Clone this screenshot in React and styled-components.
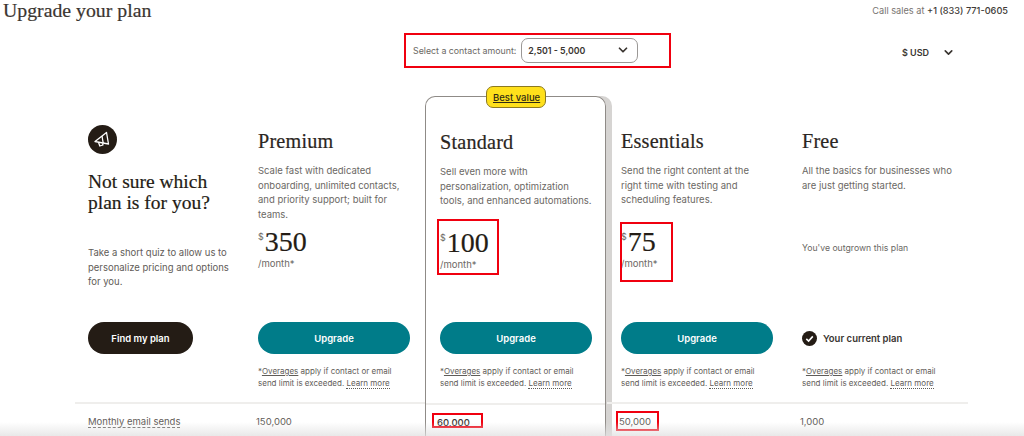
import styled, { createGlobalStyle } from 'styled-components';
import { FiChevronDown } from 'react-icons/fi';

const GlobalStyle = createGlobalStyle`
  html, body {
    margin: 0;
    padding: 0;
    background: #fff;
  }
  * {
    box-sizing: border-box;
  }
`;

const SERIF = '"Liberation Serif", serif';
const SANS = 'Inter, "Liberation Sans", sans-serif';

const Page = styled.div`
  position: relative;
  width: 1024px;
  height: 436px;
  overflow: hidden;
  display: flex;
  flex-direction: column;
  font-family: ${SANS};
  color: #241c15;
  &::after {
    content: '';
    position: absolute;
    left: 0;
    right: 0;
    bottom: 0;
    height: 14px;
    background: linear-gradient(180deg, rgba(225, 225, 225, 0), rgba(225, 225, 225, 0.75));
    pointer-events: none;
  }
`;

const Header = styled.header`
  height: 33px;
  padding: 0 16px 0 3px;
  display: flex;
  justify-content: space-between;
  align-items: flex-start;
`;

const Title = styled.h1`
  margin: 0;
  font: 400 19.8px/21px ${SERIF};
  -webkit-text-stroke: 0.2px #3b3530;
  color: #3b3530;
`;

const Sales = styled.div`
  margin-top: 4px;
  font-size: 9.2px;
  line-height: 14px;
  color: #77736f;
  b {
    font-weight: 500;
    color: #403a36;
  }
`;

const Toolbar = styled.div`
  height: 63px;
  padding: 0 69px 0 404px;
  display: flex;
  justify-content: space-between;
  align-items: flex-start;
`;

const ContactPicker = styled.div`
  width: 267px;
  height: 35px;
  padding: 0 0 1px 7px;
  display: flex;
  align-items: center;
  gap: 5px;
  border: 2px solid #f0000f;
  font-size: 8.8px;
  color: #6b6864;
`;

const SelectBox = styled.div`
  width: 117px;
  height: 25px;
  padding: 0 7px 0 6px;
  display: flex;
  align-items: center;
  justify-content: space-between;
  border: 1px solid #9b9896;
  border-radius: 7px;
  font-size: 8.8px;
  font-weight: 600;
  color: #3a3531;
`;

const Currency = styled.div`
  margin-top: 13px;
  width: 53px;
  display: flex;
  align-items: center;
  justify-content: space-between;
  font-size: 9px;
  font-weight: 600;
  color: #3a3531;
`;

const Plans = styled.div`
  flex: 1;
  margin: 0 56px 0 75px;
  display: grid;
  grid-template-columns: 169px 181px 182px 181px 180px;
`;

const Column = styled.section`
  position: relative;
  display: flex;
  flex-direction: column;
  ${(p) => p.$featured && `
    border: 1px solid #8f8b87;
    border-bottom: none;
    border-radius: 10px 10px 0 0;
    box-shadow: 6px 0 0 #d6d4d2;
    margin-right: 1px;
  `}
`;

const PlanBody = styled.div`
  height: 306px;
  padding: 34px 0 0 14px;
  display: flex;
  flex-direction: column;
`;

const IntroBody = styled.div`
  height: 306px;
  padding: 29px 0 0 13px;
  display: flex;
  flex-direction: column;
`;

const Badge = styled.div`
  position: absolute;
  top: -11px;
  left: 60px;
  height: 22px;
  padding: 0 5px 0 6px;
  display: flex;
  align-items: center;
  background: #ffe01b;
  border: 1px solid #8c7a20;
  border-radius: 7px;
  font-size: 9.5px;
  font-weight: 500;
  text-decoration: underline;
  color: #2f2a14;
`;

const IconDisc = styled.div`
  width: 29px;
  height: 29px;
  border-radius: 50%;
  background: #241c15;
  display: flex;
  align-items: center;
  justify-content: center;
`;

const IntroTitle = styled.h2`
  margin: 17px 0 0;
  font: 400 19.5px/21px ${SERIF};
  -webkit-text-stroke: 0.2px #241c15;
  color: #241c15;
`;

const IntroText = styled.p`
  margin: 33px 0 0;
  height: 60px;
  width: 150px;
  font-size: 9.5px;
  line-height: 14.6px;
  color: #5f5c58;
`;

const IntroAction = styled.div`
  margin-top: 16px;
`;

const PlanName = styled.h2`
  margin: 0;
  height: 22px;
  font: 400 20.2px/22px ${SERIF};
  letter-spacing: 0.2px;
  -webkit-text-stroke: 0.2px #2b2622;
  color: #2b2622;
`;

const PlanText = styled.p`
  margin: 12px 0 0;
  height: 57px;
  width: ${(p) => (p.$featured ? 154 : 150)}px;
  font-size: 9.5px;
  line-height: 14.6px;
  color: #6b6864;
`;

const PriceBlock = styled.div`
  position: relative;
  height: ${(p) => (p.$featured ? 100 : 101)}px;
  padding-top: 5px;
`;

const Price = styled.div`
  display: flex;
  align-items: flex-start;
  font: 400 28px/31px ${SERIF};
  -webkit-text-stroke: 0.2px #241c15;
  color: #241c15;
  sup {
    margin: 6px 1px 0 0;
    font: 400 9px/10px ${SANS};
    -webkit-text-stroke: 0;
    color: #6b6864;
  }
`;

const PerMonth = styled.div`
  font-size: 9.5px;
  line-height: 14px;
  color: #6b6864;
`;

const Outgrown = styled.div`
  padding-top: 15px;
  font-size: 8.7px;
  line-height: 14px;
  color: #6b6864;
`;

const Mark = styled.div`
  position: absolute;
  left: ${(p) => p.$left}px;
  top: ${(p) => p.$top}px;
  width: ${(p) => p.$width}px;
  height: ${(p) => p.$height}px;
  border: 2px solid #f0000f;
  pointer-events: none;
`;

const Button = styled.button`
  width: ${(p) => p.$width}px;
  height: 32px;
  border: none;
  border-radius: 16px;
  background: ${(p) => p.$bg};
  color: #fff;
  font: 600 9.5px ${SANS};
`;

const CurrentPlan = styled.div`
  height: 32px;
  display: flex;
  align-items: center;
  gap: 6px;
  font-size: 9.5px;
  font-weight: 600;
  color: #3a3531;
`;

const Note = styled.p`
  margin: 11px 0 0;
  font-size: 8px;
  line-height: 12px;
  white-space: nowrap;
  color: #5f5c58;
  u {
    text-underline-offset: 1px;
  }
  span {
    border-bottom: 1px dotted #5f5c58;
  }
`;

const MetricCell = styled.div`
  position: relative;
  flex: 1;
  padding: 10px 0 0 ${(p) => p.$inset}px;
  border-top: 2px solid #efeeec;
  font-size: 9.5px;
  font-weight: ${(p) => (p.$strong ? 500 : 400)};
  line-height: 15px;
  color: ${(p) => (p.$strong ? '#3a3531' : '#5f5c58')};
  span {
    border-bottom: 1px dashed #5f5c58;
  }
`;

const Megaphone = () => (
  <svg width="19" height="19" viewBox="0 0 19 19" fill="none" stroke="#fff" strokeWidth="1.3" strokeLinejoin="round">
    <path d="M2 11.5 L13.5 2.5 L15.5 14 Z" />
    <path d="M9 6 L10.2 13.2" />
    <path d="M5.5 12.3 L6.8 16 L10 15 L9.5 13.4" />
  </svg>
);

const CheckBadge = () => (
  <svg width="15" height="15" viewBox="0 0 15 15">
    <circle cx="7.5" cy="7.5" r="7.5" fill="#241c15" />
    <path d="M4.3 7.8 L6.6 10 L10.8 5.4" fill="none" stroke="#fff" strokeWidth="1.6" />
  </svg>
);

const plans = [
  {
    name: 'Premium',
    text: 'Scale fast with dedicated onboarding, unlimited contacts, and priority support; built for teams.',
    price: '350',
    sends: '150,000',
  },
  {
    name: 'Standard',
    text: 'Sell even more with personalization, optimization tools, and enhanced automations.',
    price: '100',
    sends: '60,000',
    featured: true,
    strong: true,
    priceMark: { left: -3, top: -3, width: 62, height: 56 },
    sendsMark: { left: 6, top: 8, width: 51, height: 15 },
  },
  {
    name: 'Essentials',
    text: 'Send the right content at the right time with testing and scheduling features.',
    price: '75',
    sends: '50,000',
    priceMark: { left: -1, top: 1, width: 53, height: 60 },
    sendsMark: { left: 9, top: 7, width: 43, height: 20 },
  },
  {
    name: 'Free',
    text: 'All the basics for businesses who are just getting started.',
    sends: '1,000',
    current: true,
  },
];

const OverageNote = () => (
  <Note>
    *<u>Overages</u> apply if contact or email
    <br />
    send limit is exceeded. <span>Learn more</span>
  </Note>
);

const App = () => {
  return (
    <Page>
      <GlobalStyle />
      <Header>
        <Title>Upgrade your plan</Title>
        <Sales>
          Call sales at <b>+1 (833) 771-0605</b>
        </Sales>
      </Header>
      <Toolbar>
        <ContactPicker>
          Select a contact amount:
          <SelectBox>
            2,501 - 5,000
            <FiChevronDown size={14} strokeWidth={3} />
          </SelectBox>
        </ContactPicker>
        <Currency>
          $ USD
          <FiChevronDown size={13} strokeWidth={3} />
        </Currency>
      </Toolbar>
      <Plans>
        <Column>
          <IntroBody>
            <IconDisc>
              <Megaphone />
            </IconDisc>
            <IntroTitle>
              Not sure which
              <br />
              plan is for you?
            </IntroTitle>
            <IntroText>Take a short quiz to allow us to personalize pricing and options for you.</IntroText>
            <IntroAction>
              <Button $width={105} $bg="#241c15">
                Find my plan
              </Button>
            </IntroAction>
          </IntroBody>
          <MetricCell $inset={13}>
            <span>Monthly email sends</span>
          </MetricCell>
        </Column>
        {plans.map((plan) => (
          <Column key={plan.name} $featured={plan.featured}>
            {plan.featured && <Badge>Best value</Badge>}
            <PlanBody>
              <PlanName>{plan.name}</PlanName>
              <PlanText $featured={plan.featured}>{plan.text}</PlanText>
              <PriceBlock $featured={plan.featured}>
                {plan.price ? (
                  <>
                    <Price>
                      <sup>$</sup>
                      {plan.price}
                    </Price>
                    <PerMonth>/month*</PerMonth>
                  </>
                ) : (
                  <Outgrown>You've outgrown this plan</Outgrown>
                )}
                {plan.priceMark && <Mark $left={plan.priceMark.left} $top={plan.priceMark.top} $width={plan.priceMark.width} $height={plan.priceMark.height} />}
              </PriceBlock>
              {plan.current ? (
                <CurrentPlan>
                  <CheckBadge />
                  Your current plan
                </CurrentPlan>
              ) : (
                <Button $width={152} $bg="#007c89">
                  Upgrade
                </Button>
              )}
              <OverageNote />
            </PlanBody>
            <MetricCell $inset={plan.featured ? 11 : 12} $strong={plan.strong}>
              {plan.sends}
              {plan.sendsMark && <Mark $left={plan.sendsMark.left} $top={plan.sendsMark.top} $width={plan.sendsMark.width} $height={plan.sendsMark.height} />}
            </MetricCell>
          </Column>
        ))}
      </Plans>
    </Page>
  );
};

export default App;
